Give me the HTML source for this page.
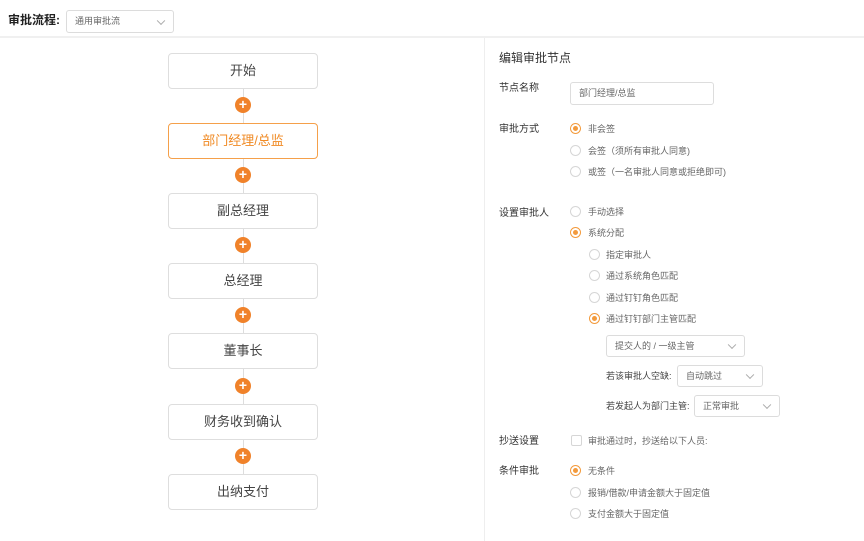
<!DOCTYPE html>
<html><head><meta charset="utf-8"><style>
*{box-sizing:border-box;margin:0;padding:0}
body{width:864px;height:541px;background:#fff;font-family:"Liberation Sans","Noto Sans CJK SC",sans-serif;color:#333;position:relative;overflow:hidden}
.a{position:absolute;white-space:nowrap}
.hdr{left:0;top:0;width:864px;height:38px;border-bottom:2px solid #f0f0f0}
.sel{position:absolute;border:1px solid #dcdcdc;border-radius:3px;font-size:9px;color:#666;padding-left:8px;padding-bottom:2px;display:flex;align-items:center;background:#fff}
.sel:after{content:"";position:absolute;right:9px;top:50%;width:5px;height:5px;border-right:1px solid #aaa;border-bottom:1px solid #aaa;transform:translateY(-70%) rotate(45deg)}
.sel.ni:after{display:none}
.node{position:absolute;left:168px;width:150px;height:36px;border:1px solid #dedede;border-radius:4px;font-size:13px;color:#444;display:flex;align-items:center;justify-content:center;background:#fff;padding-bottom:4px}
.node.on{border-color:#f5a04a;color:#f08a24}
.line{position:absolute;left:243px;width:1px;background:#ddd}
.plus{position:absolute;left:235px;width:16px;height:16px;border-radius:50%;background:#f0822a;color:#fff;font-size:14px;line-height:15px;text-align:center;font-weight:bold}
.lbl{font-size:10px;color:#333}
.r{position:absolute;width:11px;height:11px;border-radius:50%;border:1px solid #d6d6d6;background:#fff}
.r.on{border-color:#f39a3c}
.r.on:after{content:"";position:absolute;left:2px;top:2px;width:5px;height:5px;border-radius:50%;background:#f39a3c}
.t{font-size:9px;color:#666}
</style></head><body>
<div class="a hdr"></div>
<div class="a" style="left:8px;top:11px;font-size:12px;font-weight:bold;color:#222">审批流程:</div>
<div class="sel" style="left:66px;top:10px;width:108px;height:23px">通用审批流</div>
<div class="a" style="left:484px;top:38px;width:1px;height:503px;background:#eee"></div>

<div class="line" style="top:89px;height:34px"></div>
<div class="line" style="top:159px;height:34px"></div>
<div class="line" style="top:229px;height:34px"></div>
<div class="line" style="top:299px;height:34px"></div>
<div class="line" style="top:369px;height:35px"></div>
<div class="line" style="top:440px;height:34px"></div>
<div class="node" style="top:53px">开始</div>
<div class="node on" style="top:123px">部门经理/总监</div>
<div class="node" style="top:193px">副总经理</div>
<div class="node" style="top:263px">总经理</div>
<div class="node" style="top:333px">董事长</div>
<div class="node" style="top:404px">财务收到确认</div>
<div class="node" style="top:474px">出纳支付</div>
<div class="plus" style="top:97px">+</div>
<div class="plus" style="top:167px">+</div>
<div class="plus" style="top:237px">+</div>
<div class="plus" style="top:307px">+</div>
<div class="plus" style="top:378px">+</div>
<div class="plus" style="top:448px">+</div>

<div class="a" style="left:499px;top:49px;font-size:12px;color:#333">编辑审批节点</div>
<div class="a lbl" style="left:499px;top:79px">节点名称</div>
<div class="sel ni" style="left:570px;top:82px;width:144px;height:23px;border-color:#ddd">部门经理/总监</div>
<div class="a lbl" style="left:499px;top:120px">审批方式</div>
<div class="r on" style="left:570px;top:123px"></div><div class="a t" style="left:588px;top:122px">非会签</div>
<div class="r" style="left:570px;top:145px"></div><div class="a t" style="left:588px;top:144px">会签（须所有审批人同意)</div>
<div class="r" style="left:570px;top:166px"></div><div class="a t" style="left:588px;top:165px">或签（一名审批人同意或拒绝即可)</div>
<div class="a lbl" style="left:499px;top:204px">设置审批人</div>
<div class="r" style="left:570px;top:206px"></div><div class="a t" style="left:588px;top:205px">手动选择</div>
<div class="r on" style="left:570px;top:227px"></div><div class="a t" style="left:588px;top:226px">系统分配</div>
<div class="r" style="left:589px;top:249px"></div><div class="a t" style="left:606px;top:248px">指定审批人</div>
<div class="r" style="left:589px;top:270px"></div><div class="a t" style="left:606px;top:269px">通过系统角色匹配</div>
<div class="r" style="left:589px;top:292px"></div><div class="a t" style="left:606px;top:291px">通过钉钉角色匹配</div>
<div class="r on" style="left:589px;top:313px"></div><div class="a t" style="left:606px;top:312px">通过钉钉部门主管匹配</div>
<div class="sel" style="left:606px;top:335px;width:139px;height:22px">提交人的 / 一级主管</div>
<div class="a t" style="left:606px;top:369px;color:#444">若该审批人空缺:</div>
<div class="sel" style="left:677px;top:365px;width:86px;height:22px">自动跳过</div>
<div class="a t" style="left:606px;top:399px;color:#444">若发起人为部门主管:</div>
<div class="sel" style="left:694px;top:395px;width:86px;height:22px">正常审批</div>
<div class="a lbl" style="left:499px;top:432px">抄送设置</div>
<div class="a" style="left:571px;top:435px;width:11px;height:11px;border:1px solid #d6d6d6;border-radius:2px"></div>
<div class="a t" style="left:588px;top:434px">审批通过时，抄送给以下人员:</div>
<div class="a lbl" style="left:499px;top:462px">条件审批</div>
<div class="r on" style="left:570px;top:465px"></div><div class="a t" style="left:588px;top:464px">无条件</div>
<div class="r" style="left:570px;top:487px"></div><div class="a t" style="left:588px;top:486px">报销/借款/申请金额大于固定值</div>
<div class="r" style="left:570px;top:508px"></div><div class="a t" style="left:588px;top:507px">支付金额大于固定值</div>
</body></html>
